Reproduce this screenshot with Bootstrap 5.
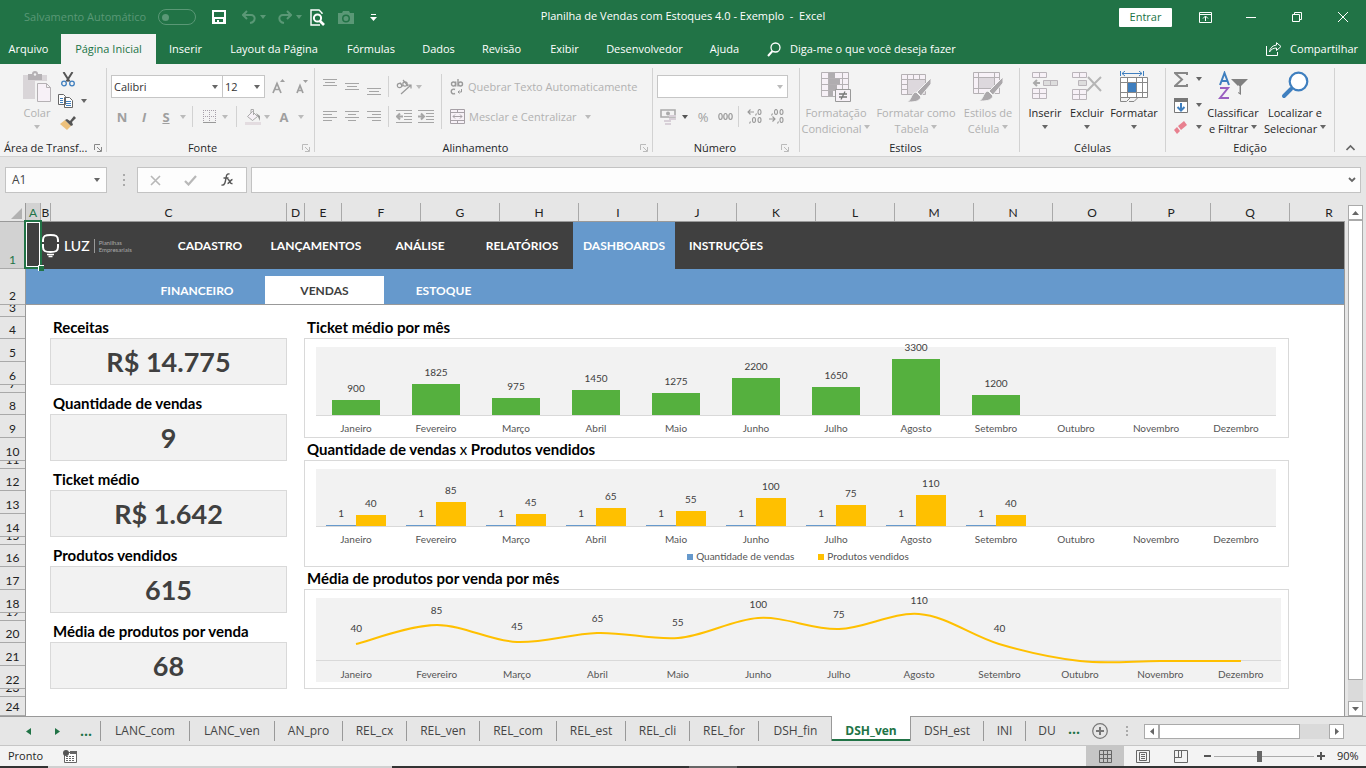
<!DOCTYPE html>
<html lang="pt-BR">
<head>
<meta charset="utf-8">
<meta name="viewport" content="width=device-width, initial-scale=1">
<title>Planilha de Vendas com Estoques 4.0 - Exemplo - Excel</title>
<link href="https://cdn.jsdelivr.net/npm/bootstrap@5.3.0/dist/css/bootstrap.min.css" rel="stylesheet">
<style>
:root{--green:#217346;--pane:#f3f3f3;--line:#d2d2d2;--frame:#e6e6e6;--off:#b1b1b1;--ink:#262626}
body{font:11px/16px "Open Sans","Noto Sans",sans-serif;color:var(--ink);background:var(--frame)}
button,select,input{font:inherit}
svg{display:block;flex:none}
a{color:inherit;text-decoration:none}
.tool{border:0;background:none;padding:0;display:flex;align-items:center;justify-content:center;flex:none;color:inherit}
.tri{display:inline-block;border:3px solid transparent;border-top:4px solid #666;border-bottom:0;flex:none}
.off,.bigbtn.off{color:var(--off)}
.off .tri{border-top-color:#bbb}
.off .tri.dark{border-top-color:#555}
/* title bar */
.titlebar{height:34px;background:var(--green);color:#fff}
.faint,.tool.faint{color:#5a9876}
.faint .tri{border-top-color:#5a9876}
.autosave{width:38px;height:16px;border:1px solid #5a9876;border-radius:8px;padding:4px}
.autosave span{display:block;width:7px;height:7px;border-radius:50%;background:#5a9876;margin-left:-1px}
.doc-title{left:0;right:0;top:8px;pointer-events:none}
.signin{width:53px;height:19px;background:#fff;color:var(--green);border:0;border-radius:1px;padding:0}
.wins{margin-left:10px}
.win{width:46px;height:34px}
/* ribbon tabs */
.tabs-row{height:30px;background:var(--green);color:#fff}
.rtab{height:30px;display:flex;align-items:center;justify-content:center;white-space:nowrap;flex:none}
.rtab.on{background:var(--pane);color:var(--green)}
.t42{width:61px}.t58{width:59px}.t66{width:67px}.t76{width:76px}.t95{width:95px}.t101{width:101px}.t118{width:118px}
/* ribbon */
.ribbon{height:93px;background:var(--pane);border-bottom:1px solid var(--line)}
.grp{height:92px;flex:none;display:flex;flex-direction:column;background:linear-gradient(#d2d2d2,#d2d2d2) right 4px/1px 84px no-repeat}
.grp-body{height:76px;display:flex;flex:none}
.grp-name{height:16px;display:flex;align-items:center;white-space:nowrap;padding:0 5px 0 4px}
.grp-name.inner{padding-right:11px}
.g107{width:107px}.g208{width:208px}.g338{width:338px}.g147{width:147px}.g220{width:220px}.g146{width:146px}.g169{width:169px}
.two-rows{padding:11px 0 0 4px;display:flex;flex-direction:column;gap:7px}
.trow{height:23px;display:flex;align-items:center}
.s8{width:8px}.s12{width:12px}.s20{width:20px}.s22{width:22px}.s24{width:24px}.s26{width:26px}
.vsep{width:1px;height:21px;background:var(--line);margin:0 4px 0 3px;flex:none}
.vsep.wide{margin:0 6px 0 7px}
.vsep.tall{height:55px;margin:10px 4px 0 0}
.bigbtn{border:0;background:none;padding:7px 0 0;display:flex;flex-direction:column;align-items:center;color:inherit;text-align:center;white-space:nowrap;flex:none;line-height:16px;height:76px}
.bigbtn svg{margin-bottom:2px}
.b42{width:42px}.b52{width:52px}.b62{width:62px}.b72{width:72px}.b88{width:88px}.b56{width:56px}
.combo{appearance:none;height:23px;border:1px solid #c6c6c6;border-radius:0;background:#fff url("data:image/svg+xml,%3Csvg xmlns='http://www.w3.org/2000/svg' width='6' height='4'%3E%3Cpath d='M0 0h6L3 4z' fill='%23666'/%3E%3C/svg%3E") right 4px center no-repeat;padding:0 2px;color:#333;flex:none}
.combo.dis{background-image:url("data:image/svg+xml,%3Csvg xmlns='http://www.w3.org/2000/svg' width='6' height='4'%3E%3Cpath d='M0 0h6L3 4z' fill='%23bbb'/%3E%3C/svg%3E")}
.c111{width:112px;margin-right:-1px}.c43{width:43px}.c131{width:131px}
.fmt{font-size:13px;font-weight:700;color:#9f9f9f}
/* formula bar */
.fbar{height:46px;padding:10px 5px 10px}
.fbox{height:26px;border:1px solid #c3c3c3;background:#fdfdfd;border-radius:0}
.namebox{width:102px;padding:0 6px;color:#444;font-size:12px}
.fxbox{width:110px}
/* grid */
.colhead{height:19px;border-bottom:1px solid #999;font:12px/19px Lato,sans-serif;color:#222}
.colhead div{flex:none;text-align:center;border-right:1px solid #a9a9a9}
.colhead .corner{width:26px;border-right-color:#999;padding:5px 3px 3px 11px}
.cA{width:15px;background:#d2d2d2;color:var(--green)}.cB{width:10px}.cC{width:236px}.cD{width:18px}.cE{width:37px}.cX{width:79px}
.rowhead{width:26px;border-right:1px solid #999;font:12px/16px Lato,sans-serif;color:#222;flex:none}
.rowhead div{display:flex;align-items:flex-end;justify-content:center;overflow:hidden;border-bottom:1px solid #a9a9a9}
.r47{height:47px}.r36{height:36px}.r12{height:12px}.r22{height:22px}.r23{height:23px}.r8{height:8px}.r19{height:19px}
.sheet{background:#fff;border-right:1px solid #999;min-width:0}
.nav1{height:47px;background:#404040;color:#fff;font:700 12px/16px Lato,sans-serif}
.nav1 a{height:47px;display:flex;align-items:center;justify-content:center;flex:none}
.n106{width:106px}.n102{width:102px}.n136{width:136px}.n119{width:119px}
.nav1 .on{background:#69c}
.brand{width:131px;padding:0 0 0 15px}
.brand b{font:500 14px/16px Lato,sans-serif}
.brand small{font:6px/7px Lato,sans-serif;color:#aaa;border-left:1px solid #999;padding-left:4px}
.nav2{height:36px;background:#69c;color:#fff;font:700 12px/16px Lato,sans-serif;border-bottom:1px solid #999;padding-left:103px}
.nav2 a{height:28px;padding-top:2px;display:flex;align-items:center;justify-content:center;flex:none}
.nav2 .on{background:#fff;color:#404040}
.selbox{left:-2px;top:-2px;width:18px;height:49px;border:2px solid var(--green);box-shadow:inset 0 0 0 1px #fff;background:#404040}
.selbox::after{content:"";position:absolute;right:-4px;bottom:-4px;width:6px;height:6px;background:var(--green);border:1px solid #fff;border-width:1px 0 0 1px}
.dash{padding:11px 55px 0 24px;gap:17px}
.kpis{width:237px;flex:none}
.cap{font:700 15px/23px Lato,sans-serif;color:#000;height:22px;padding-left:3px;margin:0;white-space:nowrap}
.kpi{height:47px;background:#f2f2f2;border:1px solid #d9d9d9;font:700 27px/45px Lato,sans-serif;color:#404040;text-align:center;margin-bottom:7px}
.chartbox{border:1px solid #d9d9d9;padding:8px 12px 0 11px;font:10px/12px Lato,sans-serif;color:#404040}
.h100p{height:100px}.h107p{height:107px}
.months{display:grid;grid-template-columns:repeat(12,1fr);text-align:center}
.plot{grid-template-rows:100%;background:#f2f2f2;border-bottom:1px solid #d9d9d9}
.plot>div{display:flex;flex-direction:column;justify-content:flex-end;align-items:center;min-width:0}
.p69{height:69px}.p58{height:58px}.p63{height:63px}
.gbar{width:59%;background:#55b03e;margin-top:6px;flex:none}
.names{color:#555;line-height:16px;padding-top:4px}
.linewrap .names{padding-top:5px}
.legend{padding-top:1px}
.plot>.pair{flex-direction:row;justify-content:center;align-items:flex-end}
.pair div{width:37%;text-align:center}
.bb,.ob{display:block;margin-top:6px}
.bb{background:#69c;height:1px}.ob{background:#ffc000}
.legend i{width:6px;height:6px;display:inline-block;margin:0 3px 0 0}
.linewrap{background:#f2f2f2;height:84px;margin-right:-5px}
.linewrap svg{left:0;top:0}
.plot.over{background:none}
/* scroll bars */
.vscroll{width:21px;padding:2px 3px 0;flex:none}
.sbtn{width:15px;height:15px;border:1px solid #aaa;background:#fff;padding:0;display:flex;align-items:center;justify-content:center;flex:none}
.track{background:#dadada}
.thumb{background:#fff;border:1px solid #aaa}
.vlen{height:460px;width:15px}
.hs{width:170px;height:15px}
.hthumb{width:141px}
.hend{margin-right:22px}
/* sheet tabs */
.sheets{height:29px;border-top:1px solid #999;font-size:12px;color:#444}
.stab{height:20px;margin-top:4px;border-right:1px solid #999;line-height:19px;text-align:center;flex:none;white-space:nowrap}
.stab.on{height:25px;margin:-1px 0 0 -1px;background:#fff;color:var(--green);font-weight:700;border:1px solid #999;border-width:0 1px;line-height:29px;box-shadow:inset 0 -2px var(--green)}
.stab.noline{border-right:0}
.arrows{width:101px;padding-left:22px}
.w69{width:69px}.w64{width:64px}.w73{width:73px}.w77{width:77px}.w85{width:85px}.w89{width:89px}.w80{width:80px}.w42{width:42px}
.w68{width:68px}
.dots3{color:var(--green);font-weight:700;font-size:14px;line-height:16px}
/* status bar */
.status{height:21px;background:var(--pane);border-top:1px solid #c6c6c6}
.vbtn{width:38px;height:20px}
.vbtn.on{background:#c6c6c6}
.zoomer{appearance:none;width:100px;height:14px;background:linear-gradient(#ababab,#ababab) center/100% 1px no-repeat;margin:0 3px}
.zoomer::-webkit-slider-thumb{appearance:none;width:5px;height:11px;background:#666}
.pct{width:25px}
.strip{height:2px;background:#333}
.strip .lt{background:#d0d0d0;width:344px;margin-left:48px}
.strip .md{background:#666;width:48px;margin-left:297px}
</style>
</head>
<body class="vh-100 d-flex flex-column overflow-hidden">

<header class="titlebar d-flex align-items-center position-relative flex-shrink-0">
  <span class="faint ms-4 me-1">Salvamento Automático</span>
  <button class="autosave tool ms-2 justify-content-start" aria-label="Salvamento Automático"><span></span></button>
  <button class="tool ms-3" aria-label="Salvar"><svg width="14" height="14" viewBox="0 0 14 14"><path fill="#fff" fill-rule="evenodd" d="M0 0h14v14H0zM2 2v5h10V2zM3 9v3h2v-2h2v2h4V9z"/></svg></button>
  <button class="tool faint ms-3" aria-label="Desfazer"><svg width="14" height="14" viewBox="0 0 14 14" fill="none" stroke="currentColor" stroke-width="2"><path d="M5 1 1 5l4 4M1 5h8c5 0 5 7-1 8"/></svg><span class="tri ms-1 me-1"></span></button>
  <button class="tool faint ms-2" aria-label="Refazer"><svg width="14" height="14" viewBox="0 0 14 14" fill="none" stroke="currentColor" stroke-width="2"><path d="m9 1 4 4-4 4M13 5H5C0 5 0 12 6 13"/></svg><span class="tri ms-1"></span></button>
  <button class="tool ms-2" aria-label="Visualizar impressão"><svg width="16" height="17" viewBox="0 0 16 17" fill="none" stroke="#fff"><path stroke-width="1.4" d="M12 5V4L9 1H1v15h9"/><circle cx="7.500" cy="9" r="3.600" stroke-width="2"/><path stroke-width="2.600" d="m10 12 4 4"/></svg></button>
  <button class="tool faint ms-2 ps-1" aria-label="Câmera"><svg width="16" height="13" viewBox="0 0 16 13"><path fill="currentColor" fill-rule="evenodd" d="M0 2h4l1-2h6l1 2h4v11H0zM8 3.500a4 4 0 1 0 0 8 4 4 0 0 0 0-8m0 1.500a2.500 2.500 0 1 1 0 5 2.500 2.500 0 0 1 0-5"/></svg></button>
  <button class="tool ms-3" aria-label="Personalizar"><svg width="7" height="7" viewBox="0 0 7 7" fill="#fff"><path d="M1 0h5v1H1zM0 3h7L3.500 7z"/></svg></button>
  <div class="doc-title position-absolute text-center">Planilha de Vendas com Estoques 4.0 - Exemplo&nbsp; -&nbsp; Excel</div>
  <button class="signin ms-auto">Entrar</button>
  <div class="wins d-flex">
    <button class="tool win" aria-label="Opções da faixa"><svg width="13" height="11" viewBox="0 0 13 11" fill="none" stroke="#fff"><path d="M.5.500h12v10H.500zM.500 2.500h12M6.500 9V4.500M4 6.500 6.500 4 9 6.500"/></svg></button>
    <button class="tool win" aria-label="Minimizar"><svg width="10" height="1"><path fill="#fff" d="M0 0h10v1H0z"/></svg></button>
    <button class="tool win" aria-label="Restaurar"><svg width="10" height="10" viewBox="0 0 10 10" fill="none" stroke="#fff"><path d="M.5 2.500h7v7h-7zM2.500 2V.500h7v7H8"/></svg></button>
    <button class="tool win" aria-label="Fechar"><svg width="10" height="10" viewBox="0 0 10 10" stroke="#fff"><path d="m0 0 10 10M10 0 0 10"/></svg></button>
  </div>
</header>

<nav class="tabs-row d-flex align-items-center flex-shrink-0">
  <a href="#" class="rtab t42 pe-1">Arquivo</a>
  <a href="#" class="rtab t95 on">Página Inicial</a>
  <a href="#" class="rtab t58">Inserir</a>
  <a href="#" class="rtab t118">Layout da Página</a>
  <a href="#" class="rtab t76">Fórmulas</a>
  <a href="#" class="rtab t58">Dados</a>
  <a href="#" class="rtab t66">Revisão</a>
  <a href="#" class="rtab t58">Exibir</a>
  <a href="#" class="rtab t101">Desenvolvedor</a>
  <a href="#" class="rtab t58">Ajuda</a>
  <a href="#" class="rtab ms-2 ps-1"><svg class="me-2" width="16" height="15" viewBox="0 0 14 15" fill="none" stroke="#fff" stroke-width="1.300"><circle cx="8.500" cy="5.500" r="4.500"/><path stroke-width="2" d="M5.500 9 1 14"/></svg>Diga-me o que você deseja fazer</a>
  <a href="#" class="rtab ms-auto pe-2"><svg class="me-2" width="16" height="14" viewBox="0 0 16 14" fill="none" stroke="#fff"><path d="M.5 4v9.500h11V10M10.500.700 15 4.500l-4.500 4V6C7 6 5 7.500 3.500 10 4 6 6.500 3.500 10.500 3z"/></svg>Compartilhar</a>
</nav>

<section class="ribbon d-flex flex-shrink-0">
  <div class="grp g107">
    <div class="grp-body ps-3">
      <button class="bigbtn b42 off"><svg width="30" height="32" viewBox="0 0 30 32"><path fill="#d9d5d8" d="M1 4h24v24H1z"/><path fill="#b5b1b4" d="M6 3h4a3 3 0 0 1 6 0h4v6H6z"/><circle cx="13" cy="3.500" r="1.200" fill="#f3f3f3"/><path fill="#f3f3f3" d="M13 10h18v22H13z"/><path fill="#f7f1f7" stroke="#b5b1b4" d="M15.500 12.500h9l4 4v14h-13zM24.500 12.500v4h4"/></svg>Colar<span class="tri mt-1"></span></button>
      <div class="pt-1">
        <button class="tool s20 r22" aria-label="Recortar"><svg width="14" height="15" viewBox="0 0 14 15" fill="none"><path stroke="#555" stroke-width="2" d="m2.500 0 6 9.500M11.500 0l-6 9.500"/><circle cx="3" cy="11.500" r="2.300" stroke="#3f7fbf" stroke-width="1.300"/><circle cx="11" cy="11.500" r="2.300" stroke="#3f7fbf" stroke-width="1.300"/></svg></button>
        <button class="tool r22" aria-label="Copiar"><svg width="15" height="14" viewBox="0 0 15 14" fill="#fff" stroke="#666"><path d="M.5.500h5l2 2v8h-7zM6.500 3.500h5l3 3v7h-8z"/><path stroke="#3f7fbf" d="M2 4.500h3M2 6.500h3M2 8.500h3M8 7.500h5M8 9.500h5M8 11.500h5"/></svg><span class="tri ms-2"></span></button>
        <button class="tool s20 r22" aria-label="Pincel"><svg width="16" height="14" viewBox="0 0 16 14"><path fill="#edc17c" d="m0 8 5-4 6 6-4 4z"/><path fill="#555" d="m5 4 2-1 3 2 4-5 2 2-4 4 1 3-2 1z"/></svg></button>
      </div>
    </div>
    <div class="grp-name"><span class="me-auto">Área de Transf...</span><svg width="8" height="8" viewBox="0 0 8 8" fill="none" stroke="#888"><path d="M.5 6V.500H6M3 3l4 4M7.500 3v4.500H3"/></svg></div>
  </div>

  <div class="grp g208">
    <div class="grp-body two-rows">
      <div class="trow">
        <select class="combo c111" aria-label="Fonte"><option>Calibri</option></select>
        <select class="combo c43" aria-label="Tamanho"><option>12</option></select>
        <button class="tool s26" aria-label="Aumentar fonte"><svg width="13" height="15" viewBox="0 0 13 15" fill="none" stroke="#9f9f9f" stroke-width="1.700"><path d="m1 14 4-9.500L9 14M2.500 10.500h5"/><path fill="#9f9f9f" stroke="none" d="M8 3h5l-2.500-3z"/></svg></button>
        <button class="tool s22" aria-label="Diminuir fonte"><svg width="12" height="14" viewBox="0 0 12 14" fill="none" stroke="#9f9f9f" stroke-width="1.700"><path d="m1 13 3-7.500L7 13M2 10.500h4"/><path fill="#9f9f9f" stroke="none" d="M7 0h5L9.500 3z"/></svg></button>
      </div>
      <div class="trow off">
        <button class="tool s22 fmt">N</button><button class="tool s22 fmt fst-italic">I</button><button class="tool s22 fmt text-decoration-underline">S</button>
        <span class="tool s12"><span class="tri"></span></span><span class="vsep"></span>
        <button class="tool s24" aria-label="Bordas"><svg width="13" height="13" viewBox="0 0 13 13" fill="none" stroke="#a79fa9"><path stroke-dasharray="1 1" d="M0 .500h13M.5 0v13M12.500 0v13M6.500 0v13M0 6.500h13"/><path stroke="#999" d="M0 12.500h13"/></svg></button><span class="tool s8"><span class="tri"></span></span>
        <span class="vsep wide"></span>
        <button class="tool s20" aria-label="Preenchimento"><svg width="17" height="16" viewBox="0 0 17 16"><path fill="#f7f1f7" stroke="#aaa" d="m2.500 7.500 5-5 5 5-5 4zM6 4V.500h2.500V6"/><path fill="#999" d="m11 4 4 3v5l-2-4z"/><path fill="#e3dce0" d="M0 13h16v3H0z"/></svg></button><span class="tool s8"><span class="tri"></span></span>
        <button class="tool s26 fmt">A</button><span class="tool s8"><span class="tri"></span></span>
      </div>
    </div>
    <div class="grp-name"><span class="mx-auto pe-2">Fonte</span><svg width="8" height="8" viewBox="0 0 8 8" fill="none" stroke="#bbb"><path d="M.5 6V.500H6M3 3l4 4M7.500 3v4.500H3"/></svg></div>
  </div>

  <div class="grp g338 off">
    <div class="grp-body">
      <div class="two-rows">
        <div class="trow">
          <button class="tool s22" aria-label="Alinhar em cima"><svg width="14" height="18" stroke="#a6a6a6"><path d="M0 1.500h14M2 4.500h10M0 7.500h14"/></svg></button>
          <button class="tool s22" aria-label="Alinhar no meio"><svg width="14" height="18" stroke="#a6a6a6"><path d="M0 5.500h14M2 8.500h10M0 11.500h14"/></svg></button>
          <button class="tool s22" aria-label="Alinhar embaixo"><svg width="14" height="18" stroke="#a6a6a6"><path d="M0 10.500h14M2 13.500h10M0 16.500h14"/></svg></button>
          <span class="vsep"></span>
          <button class="tool s22" aria-label="Orientação"><svg width="17" height="16" viewBox="0 0 17 16" fill="none" stroke="#999" stroke-width="1.200"><circle cx="3.500" cy="6.500" r="2.200"/><path d="m4 3.500 3 4M7 1l5 6"/><circle cx="9" cy="5" r="2.200"/><path d="m5 15 10-9M11.500 6H15v3.500"/></svg></button><span class="tool s8"><span class="tri"></span></span>
        </div>
        <div class="trow">
          <button class="tool s22" aria-label="Esquerda"><svg width="14" height="11" stroke="#a6a6a6"><path d="M0 .500h14M0 3.500h9M0 6.500h14M0 9.500h9"/></svg></button>
          <button class="tool s22" aria-label="Centro"><svg width="14" height="11" stroke="#a6a6a6"><path d="M0 .500h14M3 3.500h8M0 6.500h14M3 9.500h8"/></svg></button>
          <button class="tool s22" aria-label="Direita"><svg width="14" height="11" stroke="#a6a6a6"><path d="M0 .500h14M5 3.500h9M0 6.500h14M5 9.500h9"/></svg></button>
          <span class="vsep"></span>
          <button class="tool s22" aria-label="Diminuir recuo"><svg width="16" height="13" fill="none" stroke="#a6a6a6"><path d="M0 .500h16M8 3.500h8M8 6.500h8M8 9.500h8M0 12.500h16"/><path stroke-width="2" d="M1 6.500h6M4 3.500l-3 3 3 3"/></svg></button>
          <button class="tool s22" aria-label="Aumentar recuo"><svg width="16" height="13" fill="none" stroke="#a6a6a6"><path d="M0 .500h16M8 3.500h8M8 6.500h8M8 9.500h8M0 12.500h16"/><path stroke-width="2" d="M0 6.500h6M3 3.500l3 3-3 3"/></svg></button>
        </div>
      </div>
      <span class="vsep tall ms-1"></span>
      <div class="two-rows ps-0">
        <div class="trow"><button class="tool"><svg class="ms-1 me-1" width="14" height="16" viewBox="0 0 14 16" fill="none" stroke="#999" stroke-width="1.400"><circle cx="3.500" cy="5" r="2"/><path d="M5.700 2.500v5M8 0v7.500"/><circle cx="10.500" cy="5" r="2"/><path d="M5 10.500c-5-2-5 6 0 4"/><path stroke-width="1" d="M11.500 10v3H8m1.500-1.500L8 13l1.500 1.500"/></svg>Quebrar Texto Automaticamente</button></div>
        <div class="trow"><button class="tool"><svg class="ms-1 me-1" width="15" height="15" viewBox="0 0 15 15" fill="#f7f1f7" stroke="#a6a0a6"><path d="M.5.500h14v14H.500zM.500 3.500h14M.500 11.500h14M7.500 0v3.500M7.500 11.500V15"/><path fill="none" d="M3 7.500h9M5 5.500l-2 2 2 2M10 5.500l2 2-2 2"/></svg>Mesclar e Centralizar<span class="tri ms-2"></span></button></div>
      </div>
    </div>
    <div class="grp-name text-dark"><span class="mx-auto pe-2">Alinhamento</span><svg width="8" height="8" viewBox="0 0 8 8" fill="none" stroke="#bbb"><path d="M.5 6V.500H6M3 3l4 4M7.500 3v4.500H3"/></svg></div>
  </div>

  <div class="grp g147">
    <div class="grp-body two-rows">
      <div class="trow"><select class="combo dis c131" aria-label="Formato de número"><option></option></select></div>
      <div class="trow off">
        <button class="tool s22" aria-label="Moeda"><svg width="16" height="16" viewBox="0 0 16 16"><path fill="none" stroke="#aaa" stroke-width="1.600" d="M1 1h14v7H1z"/><circle cx="8" cy="4.500" r="2" fill="#aaa"/><path fill="#d8d0d8" d="M9 6h7v2H9zM9 9h7v2H9zM4 11h7v2H4zM5 14h6v2H5z"/></svg></button>
        <span class="tool s12"><span class="tri dark"></span></span>
        <button class="tool s24 fmt fw-normal">%</button>
        <button class="tool s20" aria-label="Milhares"><svg width="15" height="9" viewBox="0 0 15 9" fill="none" stroke="#9a9a9a" stroke-width="1.200"><ellipse cx="2.500" cy="4.500" rx="1.700" ry="3"/><ellipse cx="7.500" cy="4.500" rx="1.700" ry="3"/><ellipse cx="12.500" cy="4.500" rx="1.700" ry="3"/></svg></button>
        <span class="vsep"></span>
        <button class="tool s22" aria-label="Aumentar decimais"><svg width="15" height="15" viewBox="0 0 15 15" fill="none" stroke="#999" stroke-width="1.100"><ellipse cx="12.500" cy="3" rx="1.500" ry="2.500"/><ellipse cx="7" cy="11" rx="1.500" ry="2.500"/><ellipse cx="12.500" cy="11" rx="1.500" ry="2.500"/><path d="M1 3h6M3.500.500 1 3l2.500 2.500M9.500 4.500l-1 2M3.500 12.500l-1 2"/></svg></button>
        <button class="tool s22" aria-label="Diminuir decimais"><svg width="15" height="15" viewBox="0 0 15 15" fill="none" stroke="#999" stroke-width="1.100"><ellipse cx="7" cy="3" rx="1.500" ry="2.500"/><ellipse cx="12.500" cy="3" rx="1.500" ry="2.500"/><ellipse cx="12.500" cy="11" rx="1.500" ry="2.500"/><path d="M0 10h6M3.500 7.500 6 10l-2.500 2.500M3.500 4.500l-1 2M9.500 12.500l-1 2"/></svg></button>
      </div>
    </div>
    <div class="grp-name inner"><span class="mx-auto pe-2">Número</span><svg width="8" height="8" viewBox="0 0 8 8" fill="none" stroke="#bbb"><path d="M.5 6V.500H6M3 3l4 4M7.500 3v4.500H3"/></svg></div>
  </div>

  <div class="grp g220 off">
    <div class="grp-body">
      <button class="bigbtn b72 off"><svg width="30" height="32" viewBox="0 0 30 32"><path fill="#f7f1f7" stroke="#b5b1b4" d="M.5 1.500h27v24H.500zM.500 7.500h27M.500 13.500h27M.500 19.500h27M7.500 1v25M21.500 1v25"/><path fill="#b0adb0" d="M8 2h6v5H8zM8 8h11v5H8zM8 14h8v5H8zM8 20h4v5H8z"/><path fill="#f7f1f7" stroke="#999" d="M14.500 18.500h15v12h-15z"/><path stroke="#777" stroke-width="1.300" d="M18 23h8M18 26h8M24 20.500l-4 8"/></svg>Formatação<span>Condicional <i class="tri mb-1"></i></span></button>
      <button class="bigbtn b88 off"><svg width="30" height="32" viewBox="0 0 30 32"><path fill="#f7f1f7" stroke="#b5b1b4" d="M.5 3.500h24v20H.500zM.500 8.500h24M.500 13.500h24M.500 18.500h24M6.500 3v20M12.500 3v20M18.500 3v20"/><path fill="#ddd8dd" d="M7 9h17v14H7z"/><path fill="#aba8ab" stroke="#f3f3f3" d="M30 7v6L20 25l-4-4zM15 21l5 5c-2 5-7 5-14 5 5-2 4-9 9-10"/></svg>Formatar como<span>Tabela <i class="tri mb-1"></i></span></button>
      <button class="bigbtn b56 off"><svg width="30" height="32" viewBox="0 0 30 32"><path fill="#f7f1f7" stroke="#b5b1b4" d="M.5 1.500h26v21H.500zM.500 6.500h26M.500 17.500h26M5.500 1v22M21.500 1v22"/><path fill="#ddd8dd" d="M6 7h15v10H6z"/><path fill="#aba8ab" stroke="#f3f3f3" d="M30 6v6L20 24l-4-4zM15 20l5 5c-2 5-7 5-14 5 5-2 4-9 9-10"/></svg>Estilos de<span>Célula <i class="tri mb-1"></i></span></button>
    </div>
    <div class="grp-name text-dark"><span class="mx-auto pe-2">Estilos</span></div>
  </div>

  <div class="grp g146">
    <div class="grp-body ps-1">
      <button class="bigbtn b42"><svg width="28" height="32" viewBox="0 0 28 32" fill="#f7f1f7" stroke="#bab5ba"><path d="M1.500 1.500h14v5h-14zM8.500 1.500v5M1.500 17.500h14v10h-14zM8.500 17.500v10M1.500 22.500h14"/><path fill="#ddd" d="M12.500 9.500h14v5h-14zM19.500 9.500v5"/><path stroke="#aaa" stroke-width="2" fill="none" d="M3 12h6M6 9l-3 3 3 3"/></svg>Inserir<span class="tri mt-1"></span></button>
      <button class="bigbtn b42"><svg width="30" height="32" viewBox="0 0 30 32" fill="#f7f1f7" stroke="#bab5ba"><path d="M.5 1.500h14v5H.500zM7.500 1.500v5M.5 18.500h14v10H.500zM7.500 18.500v10M.5 23.500h14"/><path fill="#ddd" d="M6.500 9.500h8v5h-8z"/><path stroke="#b5b5b5" stroke-width="2" fill="none" d="m16 6 13 14M29 6 15 20"/></svg>Excluir<span class="tri mt-1"></span></button>
      <button class="bigbtn b52"><svg width="28" height="32" viewBox="0 0 28 32" fill="#fff" stroke="#888"><path d="M.5 6.500h27v20H.500zM.500 11.500h27M.500 21.500h27M7.500 6.500v20M16.500 6.500v20M22.500 6.500v20"/><path d="m.5 26.500 0 4h6l4-4M9 30.500h5l4-4" fill="none"/><path fill="#3f7fbf" stroke="none" d="M8 12h8v9H8z"/><path stroke="#3f7fbf" fill="none" d="M.5 0v5M23.500 0v5M2 2.500h20M5 0 2 2.500 5 5M19 0l3 2.500L19 5"/></svg>Formatar<span class="tri mt-1"></span></button>
    </div>
    <div class="grp-name"><span class="mx-auto">Células</span></div>
  </div>

  <div class="grp g169">
    <div class="grp-body ps-1">
      <div class="pt-1">
        <button class="tool r22" aria-label="AutoSoma"><svg class="ms-1 me-2" width="14" height="15" viewBox="0 0 14 15" fill="none" stroke="#888" stroke-width="2"><path d="M13 3V1H1l7 6.500L1 14h12v-2"/></svg><span class="tri"></span></button>
        <button class="tool r22 mt-1" aria-label="Preencher"><svg class="ms-1 me-2" width="14" height="15" viewBox="0 0 14 15"><path fill="#fff" stroke="#777" d="M.5.500h13v14H.500z"/><path fill="#777" d="M0 0h14v4H0z"/><path stroke="#3f7fbf" stroke-width="2" fill="none" d="M7 5v8M3.500 9 7 12.500 10.500 9"/></svg><span class="tri"></span></button>
        <button class="tool r22" aria-label="Limpar"><svg class="ms-1 me-2" width="14" height="13" viewBox="0 0 14 13"><path fill="#e8808f" d="m4 5 6-5 3 4-6 5z"/><path fill="#e8808f" d="M0 9l3-3 3 4-3 3z"/></svg><span class="tri"></span></button>
      </div>
      <button class="bigbtn b62"><svg width="30" height="32" viewBox="0 0 30 32" fill="none"><path stroke="#3f7fbf" stroke-width="2" d="M2 14 6.500 2 11 14M3.500 10h6"/><path stroke="#9a5fc0" stroke-width="2" d="M2 17h8L2 27h9"/><path fill="#808080" d="M13 8h17l-7 7v9l-3-2v-7z"/><path fill="#f3f3f3" d="m20 14 1.500 1.500V22L20 21z"/></svg>Classificar<span>e Filtrar <i class="tri mb-1"></i></span></button>
      <button class="bigbtn b62"><svg width="28" height="32" viewBox="0 0 28 32" fill="none" stroke="#3f7fbf"><circle cx="17.500" cy="10.500" r="8.800" fill="#fff" stroke-width="2.200"/><path stroke-width="4" stroke-linecap="round" d="m10 18-7 7"/></svg>Localizar e<span>Selecionar <i class="tri mb-1"></i></span></button>
    </div>
    <div class="grp-name"><span class="mx-auto">Edição</span></div>
  </div>
  <div class="flex-grow-1 d-flex align-items-end justify-content-center pb-1"><button class="tool" aria-label="Recolher"><svg width="9" height="8" viewBox="0 0 9 8" fill="none" stroke="#666" stroke-width="1.600"><path d="m.5 6 4-4 4 4"/></svg></button></div>
</section>

<section class="fbar d-flex flex-shrink-0">
  <div class="fbox namebox d-flex align-items-center justify-content-between"><span>A1</span><span class="tri"></span></div>
  <div class="s26 d-flex justify-content-center align-items-center ms-1"><svg width="2" height="12" fill="#aaa"><path d="M0 0h2v2H0zM0 5h2v2H0zM0 10h2v2H0z"/></svg></div>
  <div class="fbox fxbox d-flex align-items-center justify-content-around">
    <button class="tool" aria-label="Cancelar"><svg width="11" height="11" stroke="#b8b8b8" stroke-width="1.600"><path d="m1 1 9 9M10 1l-9 9"/></svg></button>
    <button class="tool" aria-label="Inserir"><svg width="13" height="11" fill="none" stroke="#b8b8b8" stroke-width="2.200"><path d="m1 6 3.500 3.500L12 1"/></svg></button>
    <button class="tool" aria-label="Inserir função"><svg width="13" height="14" viewBox="0 0 13 14" fill="none" stroke="#555" stroke-width="1.400"><path d="M8.500 1C6 .500 5.500 2 5 5s-1 8-4.500 7M2.500 5h5M6.500 6.500c2-1 2 5 5 4M11.500 6.500c-2 0-3 4-5 4"/></svg></button>
  </div>
  <div class="fbox flex-grow-1 ms-1 d-flex align-items-center"><input class="border-0 bg-transparent flex-grow-1" aria-label="Barra de fórmulas"><svg class="me-1" width="8" height="6" viewBox="0 0 8 6" fill="none" stroke="#666" stroke-width="1.800"><path d="m1 1 3 3 3-3"/></svg></div>
</section>

<main class="d-flex flex-grow-1 overflow-hidden">
  <div class="d-flex flex-column flex-grow-1 overflow-hidden">
    <div class="colhead d-flex overflow-hidden flex-shrink-0">
      <div class="corner"><svg width="11" height="11"><path fill="#b1b1b1" d="M11 0v11H0z"/></svg></div>
      <div class="cA">A</div><div class="cB">B</div><div class="cC">C</div><div class="cD">D</div><div class="cE">E</div><div class="cX">F</div><div class="cX">G</div><div class="cX">H</div><div class="cX">I</div><div class="cX">J</div><div class="cX">K</div><div class="cX">L</div><div class="cX">M</div><div class="cX">N</div><div class="cX">O</div><div class="cX">P</div><div class="cX">Q</div><div class="cX">R</div>
    </div>
    <div class="d-flex flex-grow-1">
      <div class="rowhead">
        <div class="r47 cA w-100">1</div><div class="r36">2</div><div class="r12">3</div><div class="r22">4</div><div class="r23">5</div><div class="r23">6</div><div class="r8">7</div><div class="r22">8</div><div class="r23">9</div><div class="r23">10</div><div class="r8">11</div><div class="r22">12</div><div class="r23">13</div><div class="r23">14</div><div class="r8">15</div><div class="r22">16</div><div class="r23">17</div><div class="r23">18</div><div class="r8">19</div><div class="r22">20</div><div class="r23">21</div><div class="r23">22</div><div class="r8">23</div><div class="r19">24</div>
      </div>
      <div class="sheet flex-grow-1 position-relative">
        <div class="selbox position-absolute"></div>
        <nav class="nav1 d-flex align-items-center">
          <div class="brand d-flex align-items-center gap-1">
            <svg width="19" height="25" viewBox="0 0 19 25" fill="none" stroke="#fff" stroke-width="2"><path d="M2 9V7c0-4 2-5 7.500-5S17 3 17 7v2M2 11v3c0 4 2 5 7.500 5s7.500-1 7.500-5v-3"/><path stroke-width="1.500" d="M6 21.500h7M7.500 23.500h4"/></svg>
            <b>LUZ</b><small>Planilhas<br>Empresariais</small>
          </div>
          <a href="#" class="n106">CADASTRO</a><a href="#" class="n106">LANÇAMENTOS</a><a href="#" class="n102">ANÁLISE</a><a href="#" class="n102">RELATÓRIOS</a><a href="#" class="n102 on">DASHBOARDS</a><a href="#" class="n102">INSTRUÇÕES</a>
        </nav>
        <nav class="nav2 d-flex align-items-end">
          <a href="#" class="n136">FINANCEIRO</a><a href="#" class="n119 on">VENDAS</a><a href="#" class="n119">ESTOQUE</a>
        </nav>
        <div class="dash d-flex">
          <div class="kpis">
            <h2 class="cap">Receitas</h2><div class="kpi">R$ 14.775</div>
            <h2 class="cap">Quantidade de vendas</h2><div class="kpi">9</div>
            <h2 class="cap">Ticket médio</h2><div class="kpi">R$ 1.642</div>
            <h2 class="cap">Produtos vendidos</h2><div class="kpi">615</div>
            <h2 class="cap">Média de produtos por venda</h2><div class="kpi">68</div>
          </div>
          <div class="flex-grow-1">
            <h2 class="cap">Ticket médio por mês</h2>
            <div class="chartbox h100p">
              <div class="months plot p69">
                <div>900<span class="gbar" style="height:15px"></span></div><div>1825<span class="gbar" style="height:31px"></span></div><div>975<span class="gbar" style="height:17px"></span></div><div>1450<span class="gbar" style="height:25px"></span></div><div>1275<span class="gbar" style="height:22px"></span></div><div>2200<span class="gbar" style="height:37px"></span></div><div>1650<span class="gbar" style="height:28px"></span></div><div>3300<span class="gbar" style="height:56px"></span></div><div>1200<span class="gbar" style="height:20px"></span></div>
              </div>
              <div class="months names"><span>Janeiro</span><span>Fevereiro</span><span>Março</span><span>Abril</span><span>Maio</span><span>Junho</span><span>Julho</span><span>Agosto</span><span>Setembro</span><span>Outubro</span><span>Novembro</span><span>Dezembro</span></div>
            </div>
            <h2 class="cap">Quantidade de vendas <span class="fw-normal">x</span> Produtos vendidos</h2>
            <div class="chartbox h107p">
              <div class="months plot p58">
                <div class="pair"><div>1<span class="bb"></span></div><div>40<span class="ob" style="height:11px"></span></div></div>
                <div class="pair"><div>1<span class="bb"></span></div><div>85<span class="ob" style="height:24px"></span></div></div>
                <div class="pair"><div>1<span class="bb"></span></div><div>45<span class="ob" style="height:12px"></span></div></div>
                <div class="pair"><div>1<span class="bb"></span></div><div>65<span class="ob" style="height:18px"></span></div></div>
                <div class="pair"><div>1<span class="bb"></span></div><div>55<span class="ob" style="height:15px"></span></div></div>
                <div class="pair"><div>1<span class="bb"></span></div><div>100<span class="ob" style="height:28px"></span></div></div>
                <div class="pair"><div>1<span class="bb"></span></div><div>75<span class="ob" style="height:21px"></span></div></div>
                <div class="pair"><div>1<span class="bb"></span></div><div>110<span class="ob" style="height:31px"></span></div></div>
                <div class="pair"><div>1<span class="bb"></span></div><div>40<span class="ob" style="height:11px"></span></div></div>
              </div>
              <div class="months names"><span>Janeiro</span><span>Fevereiro</span><span>Março</span><span>Abril</span><span>Maio</span><span>Junho</span><span>Julho</span><span>Agosto</span><span>Setembro</span><span>Outubro</span><span>Novembro</span><span>Dezembro</span></div>
              <div class="names legend ps-1 d-flex justify-content-center gap-4"><span><i class="bb"></i>Quantidade de vendas</span><span><i class="ob"></i>Produtos vendidos</span></div>
            </div>
            <h2 class="cap">Média de produtos por venda por mês</h2>
            <div class="chartbox h100p">
              <div class="linewrap position-relative">
                <svg class="position-absolute w-100" height="84" viewBox="0 0 965 84" preserveAspectRatio="none" fill="none" stroke="#ffc000" stroke-width="2"><path vector-effect="non-scaling-stroke" d="M40 46C53 43 94 27 121 27S174 43 201 44S254 36 281 35S335 42 362 40S415 22 442 20S496 32 523 31S576 14 603 16S656 38 683 46S737 60 764 63S817 63 844 63S912 63 925 63"/></svg>
                <div class="months plot over p63">
                  <div style="padding-bottom:26px">40</div><div style="padding-bottom:44px">85</div><div style="padding-bottom:28px">45</div><div style="padding-bottom:36px">65</div><div style="padding-bottom:32px">55</div><div style="padding-bottom:50px">100</div><div style="padding-bottom:40px">75</div><div style="padding-bottom:54px">110</div><div style="padding-bottom:26px">40</div>
                </div>
                <div class="months names"><span>Janeiro</span><span>Fevereiro</span><span>Março</span><span>Abril</span><span>Maio</span><span>Junho</span><span>Julho</span><span>Agosto</span><span>Setembro</span><span>Outubro</span><span>Novembro</span><span>Dezembro</span></div>
              </div>
            </div>
          </div>
        </div>
      </div>
    </div>
  </div>
  <div class="vscroll d-flex flex-column">
    <button class="sbtn" aria-label="Rolar para cima"><svg width="7" height="4"><path fill="#666" d="M0 4h7L3.500 0z"/></svg></button>
    <div class="track flex-grow-1"><div class="thumb vlen"></div></div>
    <button class="sbtn" aria-label="Rolar para baixo"><svg width="7" height="4"><path fill="#666" d="M0 0h7L3.500 4z"/></svg></button>
  </div>
</main>

<nav class="sheets d-flex flex-shrink-0">
  <div class="stab arrows d-flex align-items-center">
    <button class="tool ms-1" aria-label="Anterior"><svg width="5" height="7"><path fill="#217346" d="M5 0v7L0 3.500z"/></svg></button>
    <button class="tool ms-4" aria-label="Próxima"><svg width="5" height="7"><path fill="#217346" d="M0 0v7l5-3.500z"/></svg></button>
    <span class="dots3 ms-auto me-2">...</span>
  </div>
  <a href="#" class="stab w89">LANC_com</a><a href="#" class="stab w85">LANC_ven</a><a href="#" class="stab w68">AN_pro</a><a href="#" class="stab w64">REL_cx</a><a href="#" class="stab w73">REL_ven</a><a href="#" class="stab w77">REL_com</a><a href="#" class="stab w69">REL_est</a><a href="#" class="stab w64">REL_cli</a><a href="#" class="stab w69">REL_for</a><a href="#" class="stab w73 noline">DSH_fin</a><a href="#" class="stab w80 on">DSH_ven</a><a href="#" class="stab w73">DSH_est</a><a href="#" class="stab w42">INI</a><a href="#" class="stab w42 noline">DU</a>
  <span class="stab noline dots3">...</span>
  <button class="tool ms-2 ps-1" aria-label="Nova planilha"><svg width="16" height="16" viewBox="0 0 16 16" fill="none" stroke="#777"><circle cx="8" cy="8" r="7.300" stroke-width="1.200"/><path stroke-width="2" d="M8 4v8M4 8h8"/></svg></button>
  <div class="ms-auto d-flex align-items-center">
    <svg class="me-3" width="2" height="10" fill="#aaa"><path d="M0 0h2v2H0zM0 4h2v2H0zM0 8h2v2H0z"/></svg>
    <button class="sbtn" aria-label="Rolar para a esquerda"><svg width="4" height="7"><path fill="#666" d="M4 0v7L0 3.500z"/></svg></button>
    <div class="track d-flex hs"><div class="thumb hthumb"></div></div>
    <button class="sbtn hend" aria-label="Rolar para a direita"><svg width="4" height="7"><path fill="#666" d="M0 0v7l4-3.500z"/></svg></button>
  </div>
</nav>

<footer class="status d-flex align-items-center flex-shrink-0">
  <span class="ms-2">Pronto</span>
  <button class="tool ms-3 ps-1" aria-label="Gravar macro"><svg width="14" height="13" viewBox="0 0 14 13"><path fill="#fff" stroke="#666" d="M1.500 2.500h12v10h-12z"/><path fill="#666" d="M7 1h7v3H7z"/><circle cx="3" cy="3" r="3" fill="#555"/><path stroke="#666" stroke-dasharray="2 1" d="M3 6.500h9M3 8.500h9M3 10.500h9"/></svg></button>
  <button class="tool vbtn on ms-auto" aria-label="Normal"><svg width="13" height="13" fill="none" stroke="#666"><path d="M.5.500h12v12H.500zM.500 4.500h12M.500 8.500h12M4.500.500v12M8.500.500v12"/></svg></button>
  <button class="tool vbtn" aria-label="Layout da página"><svg width="14" height="13" fill="none" stroke="#666"><path d="M.5.500h13v12H.500zM3.500 2.500h7v8h-7zM5 4.500h4M5 6.500h4M5 8.500h4"/></svg></button>
  <button class="tool vbtn" aria-label="Quebra de página"><svg width="14" height="13" fill="none" stroke="#666"><path d="M.5.500h13v12H.500zM.500 7.500h7v-7M4.500.500v7"/></svg></button>
  <button class="tool ms-1" aria-label="Reduzir"><svg width="7" height="2"><path fill="#555" d="M0 0h7v2H0z"/></svg></button>
  <input class="zoomer" type="range" min="0" max="100" value="45" aria-label="Zoom">
  <button class="tool" aria-label="Ampliar"><svg width="8" height="8" fill="#555"><path d="M3 0h2v8H3zM0 3h8v2H0z"/></svg></button>
  <span class="pct ms-2 me-2 ps-1">90%</span>
</footer>
<div class="strip d-flex flex-shrink-0"><div class="lt"></div><div class="md"></div></div>

<script src="https://cdn.jsdelivr.net/npm/bootstrap@5.3.0/dist/js/bootstrap.bundle.min.js"></script>
</body>
</html>
